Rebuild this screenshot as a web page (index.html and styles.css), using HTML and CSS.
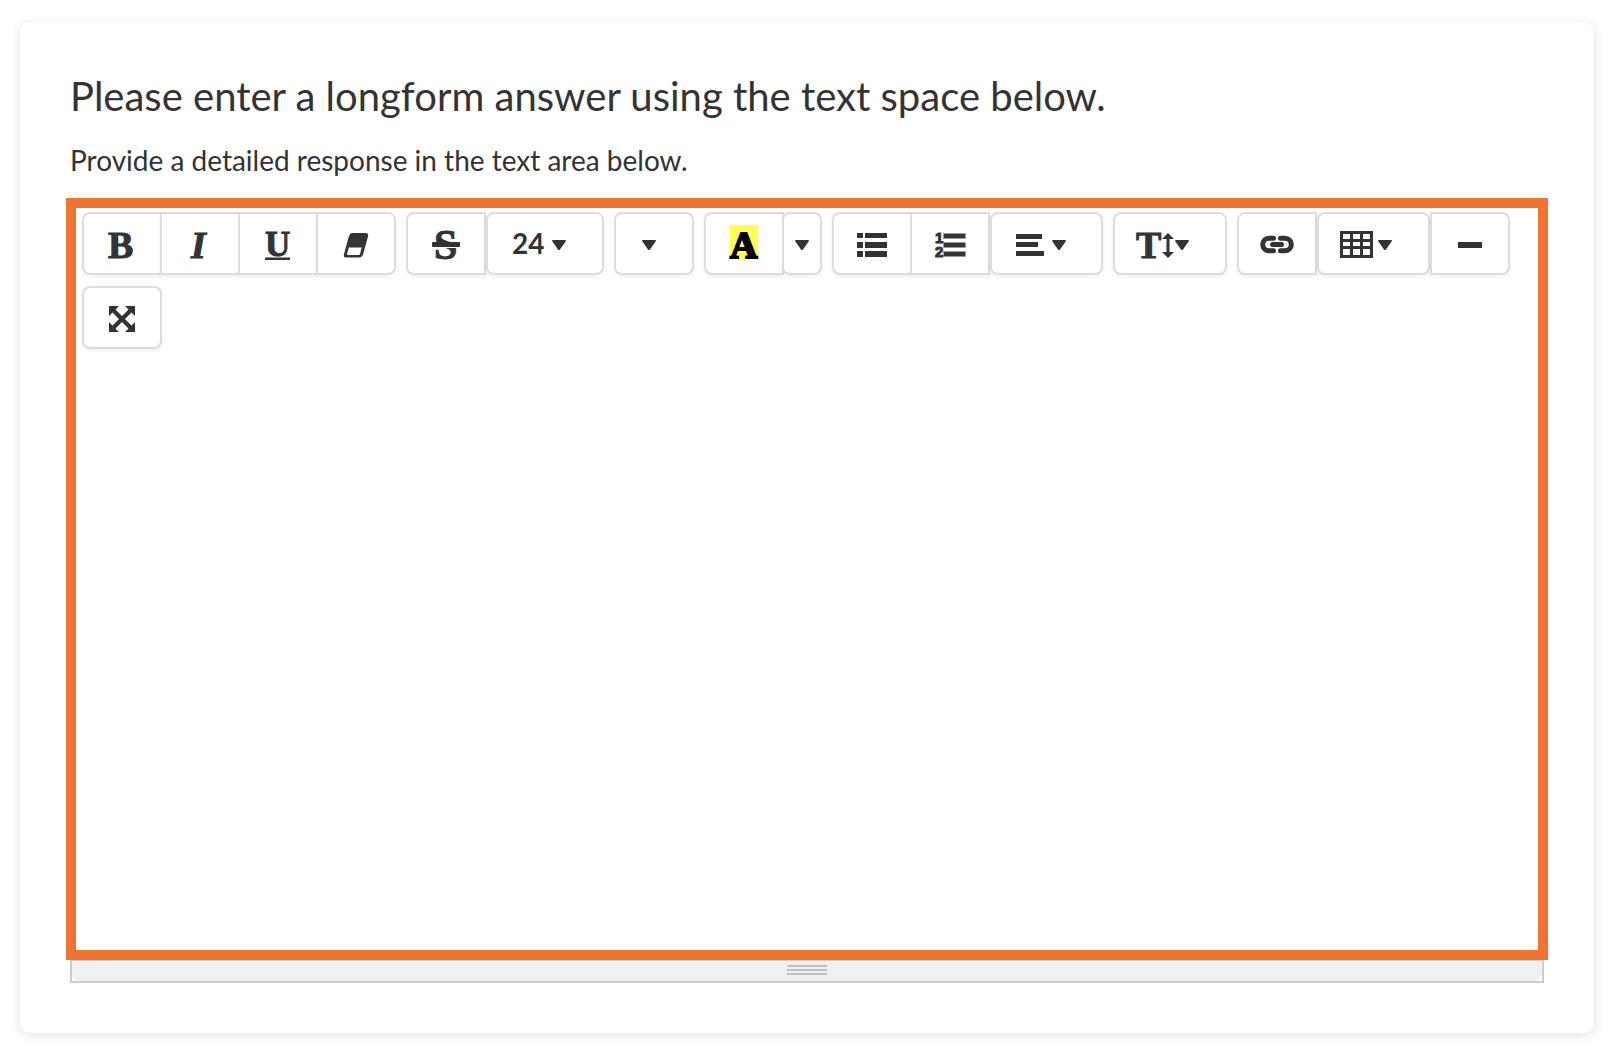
FILE: index.html
```html
<!DOCTYPE html>
<html lang="en">
<head>
    <meta charset="UTF-8">
    <meta name="viewport" content="width=device-width, initial-scale=1.0">
    <title>Longform answer</title>
    <link rel="stylesheet" href="styles.css">
</head>
<body>

    <main class="card">
        <h1 class="question">Please enter a longform answer using the text space below.</h1>
        <label class="hint" for="answer">Provide a detailed response in the text area below.</label>

        <div class="editor">
            <!-- Toolbar -->
            <div class="toolbar" role="toolbar" aria-label="Formatting">
                <div class="btn-group">
                    <button type="button" class="btn" aria-label="Bold">
                        <svg class="icon" viewBox="0 0 32 32"><text class="letter" x="2" y="29" font-size="38">B</text></svg>
                    </button>
                    <button type="button" class="btn" aria-label="Italic">
                        <svg class="icon" viewBox="0 0 32 32"><text class="letter italic" x="7" y="29" font-size="38">I</text></svg>
                    </button>
                    <button type="button" class="btn" aria-label="Underline">
                        <svg class="icon" viewBox="0 0 32 32"><text class="letter" x="3" y="27" font-size="35">U</text><path d="M3 28.500h25v2.500H3z"/></svg>
                    </button>
                    <button type="button" class="btn" aria-label="Remove formatting">
                        <svg class="icon" viewBox="0 0 32 32"><path fill-rule="evenodd" d="M12 4h13.500q3.500 0 2.500 3.500l-5 18q-1 3-4 3H6.500Q3 28.500 4 25l5-18q1-3 3-3zM8.800 18.500l-1.800 6.500q-.3 1 1 1h10.500q1.300 0 1.600-1.200l1.600-6.300z"/></svg>
                    </button>
                </div>

                <div class="btn-group">
                    <button type="button" class="btn" aria-label="Strikethrough">
                        <svg class="icon" viewBox="0 0 32 32"><text class="letter" x="4" y="30" font-size="42">S</text><path fill="#fff" d="M2 18h28v1H2z"/><rect x="2" y="13" width="28" height="5" rx="1"/></svg>
                    </button>
                    <div class="select-wrap">
                        <select class="btn" aria-label="Font size">
                            <option>24</option>
                        </select>
                        <svg class="caret" viewBox="0 0 14 10"><path d="M1 0h12q1.500 0 .6 1.400L8 9.400q-1 1-2 0L.4 1.400Q-.5 0 1 0z"/></svg>
                    </div>
                </div>

                <div class="btn-group">
                    <button type="button" class="btn menu unit" aria-label="Font size unit" aria-haspopup="true">
                        <svg class="caret" viewBox="0 0 14 10"><path d="M1 0h12q1.500 0 .6 1.400L8 9.400q-1 1-2 0L.4 1.400Q-.5 0 1 0z"/></svg>
                    </button>
                </div>

                <div class="btn-group">
                    <button type="button" class="btn" aria-label="Recent color">
                        <svg class="icon" viewBox="0 0 32 32"><path fill="#ffff55" d="M2-4h28v34H2z"/><text class="letter black" x="2" y="29" font-size="38">A</text></svg>
                    </button>
                    <button type="button" class="btn narrow" aria-label="More colors" aria-haspopup="true">
                        <svg class="caret" viewBox="0 0 14 10"><path d="M1 0h12q1.500 0 .6 1.400L8 9.400q-1 1-2 0L.4 1.400Q-.5 0 1 0z"/></svg>
                    </button>
                </div>

                <div class="btn-group">
                    <button type="button" class="btn" aria-label="Unordered list">
                        <svg class="icon" viewBox="0 0 32 32"><path d="M1 4h6v5H1zM9 4h22v5H9zM1 13h6v6H1zM9 13h22v6H9zM1 22h6v6H1zM9 22h22v6H9z"/></svg>
                    </button>
                    <button type="button" class="btn" aria-label="Ordered list">
                        <svg class="icon" viewBox="0 0 32 32">
                            <g fill="#333" stroke="#999"><path d="M9.500 4.500h22v5h-22zM9.500 13.500h22v5h-22zM9.500 22.500h22v5h-22z"/></g>
                            <text class="digit" x="1" y="14">1</text>
                            <text class="digit" x="1" y="28">2</text>
                        </svg>
                    </button>
                    <button type="button" class="btn menu" aria-label="Paragraph" aria-haspopup="true">
                        <svg class="icon align" viewBox="0 0 28 32"><path d="M0 5h26v5H0zM0 13h22v5H0zM0 22h28v5H0z"/></svg>
                        <svg class="caret" viewBox="0 0 14 10"><path d="M1 0h12q1.500 0 .6 1.400L8 9.400q-1 1-2 0L.4 1.400Q-.5 0 1 0z"/></svg>
                    </button>
                </div>

                <div class="btn-group">
                    <button type="button" class="btn menu height" aria-label="Line height" aria-haspopup="true">
                        <svg class="icon wide" viewBox="0 0 40 32"><text class="letter" x="1" y="29" font-size="38">T</text><path d="M33 4l6 6h-4.500v13H39l-6 6-6-6h4.500V10H27z"/></svg>
                        <svg class="caret" viewBox="0 0 14 10"><path d="M1 0h12q1.500 0 .6 1.400L8 9.400q-1 1-2 0L.4 1.400Q-.5 0 1 0z"/></svg>
                    </button>
                </div>

                <div class="btn-group">
                    <button type="button" class="btn" aria-label="Link">
                        <svg class="icon link" viewBox="0 0 34 32"><path fill="none" stroke="#333" stroke-width="5" stroke-linecap="round" d="M13.500 9.200H9a6.200 6.200 0 0 0 0 12.600h4.500M20.500 9.200H25a6.200 6.200 0 0 1 0 12.600h-4.500M12.500 15.500h9"/></svg>
                    </button>
                    <button type="button" class="btn menu table" aria-label="Table" aria-haspopup="true">
                        <svg class="icon grid" viewBox="0 0 33 32"><path fill-rule="evenodd" d="M0 2h33v27H0zM3 5v5h7V5zM13 5v5h7V5zM23 5v5h7V5zM3 13v4h7v-4zM13 13v4h7v-4zM23 13v4h7v-4zM3 20v6h7v-6zM13 20v6h7v-6zM23 20v6h7v-6z"/></svg>
                        <svg class="caret" viewBox="0 0 14 10"><path d="M1 0h12q1.500 0 .6 1.400L8 9.400q-1 1-2 0L.4 1.400Q-.5 0 1 0z"/></svg>
                    </button>
                    <button type="button" class="btn" aria-label="Horizontal rule">
                        <svg class="icon" viewBox="0 0 32 32"><path d="M4 13h24v6H4z"/></svg>
                    </button>
                </div>

                <div class="btn-group">
                    <button type="button" class="btn" aria-label="Full screen">
                        <svg class="icon" viewBox="0 0 32 32"><path d="M3 3h10l-3.500 3.500L16 13l6.500-6.500L19 3h10v10l-3.500-3.500L19 16l6.500 6.500L29 19v10H19l3.500-3.500L16 19l-6.500 6.500L13 29H3V19l3.500 3.500L13 16 6.500 9.500 3 13z"/></svg>
                    </button>
                </div>
            </div>

            <textarea class="editable" id="answer"></textarea>
        </div>

        <!-- Resize handle -->
        <div class="statusbar">
            <div class="grip">
                <div class="grip-line"></div>
                <div class="grip-line"></div>
                <div class="grip-line"></div>
            </div>
        </div>
    </main>

</body>
</html>
```
FILE: styles.css
```css
* {
    box-sizing: border-box;
}

body {
    margin: 0;
    padding: 22px 20px 24px;
    font-family: Lato, sans-serif;
    color: #333;
    background-color: #fff;
}

/* Card */
.card {
    padding: 50px;
    background-color: #fff;
    border-radius: 10px;
    box-shadow: 0 2px 12px rgba(0, 0, 0, 0.12);
}

.question {
    margin: 0 0 20px;
    font-size: 40px;
    font-weight: 400;
    line-height: 48px;
}

.hint {
    display: block;
    margin-bottom: 18px;
    font-size: 28px;
    line-height: 40px;
}

/* Editor */
.editor {
    margin: 0 -4px;
    border: 10px solid #f07330;
    background-color: #fff;
}

.toolbar {
    display: flex;
    flex-wrap: wrap;
    gap: 11px 10px;
    padding: 4px 6px 0;
}

.btn-group {
    display: flex;
}

.btn {
    display: flex;
    align-items: center;
    justify-content: center;
    width: 80px;
    height: 63px;
    margin: 0;
    padding: 3px 0 0;
    font-family: inherit;
    color: #333;
    background-color: #fff;
    border: 2px solid #ddd;
    border-radius: 0;
    box-shadow: 0 2px 4px rgba(0, 0, 0, 0.06);
    cursor: pointer;
}

.btn:hover {
    background-color: #f5f5f5;
}

.btn + .btn {
    margin-left: -2px;
}

.btn:first-child {
    border-top-left-radius: 8px;
    border-bottom-left-radius: 8px;
}

.btn:last-child {
    border-top-right-radius: 8px;
    border-bottom-right-radius: 8px;
}

.btn.narrow {
    width: 40px;
    border-radius: 8px;
}

/* Buttons that open a menu */
.btn.menu {
    justify-content: flex-start;
    gap: 8px;
    width: 113px;
    padding-left: 24px;
    border-radius: 8px;
}

.btn + .btn.menu,
.btn.menu + .btn {
    margin-left: 0;
}

.btn.menu.unit {
    width: 80px;
    padding-left: 26px;
}

.btn.menu.height {
    gap: 0;
    width: 114px;
    padding-left: 20px;
}

.btn.menu.table {
    gap: 5px;
    padding-left: 21px;
}

.select-wrap {
    position: relative;
    width: 118px;
}

.select-wrap .btn {
    appearance: none;
    width: 100%;
    padding: 0 24px 2px;
    font-size: 28px;
    font-weight: 700;
    border-radius: 8px;
}

.select-wrap .caret {
    position: absolute;
    top: 28px;
    left: 66px;
    pointer-events: none;
}

/* Icons */
.icon {
    flex: none;
    width: 32px;
    height: 32px;
    overflow: visible;
    fill: #333;
}

.icon.align {
    width: 28px;
}

.icon.wide {
    width: 40px;
}

.icon.link {
    width: 34px;
}

.icon.grid {
    width: 33px;
}

.caret {
    flex: none;
    width: 14px;
    height: 10px;
    fill: #333;
}

.letter {
    font-family: "Liberation Serif", serif;
    font-weight: 700;
    stroke: #333;
    stroke-width: 1px;
}

.letter.italic {
    font-style: italic;
}

.letter.black {
    fill: #000;
    stroke: #000;
    stroke-width: 2px;
}

.digit {
    font-family: "Liberation Sans", sans-serif;
    font-size: 15px;
    font-weight: 700;
    stroke: #333;
    stroke-width: 1px;
}

.editable {
    display: block;
    width: 100%;
    height: 601px;
    padding: 20px;
    font-family: inherit;
    font-size: 28px;
    color: #333;
    background-color: transparent;
    border: none;
    outline: none;
    resize: none;
}

/* Status bar */
.statusbar {
    border: 2px solid #ccc;
    border-top-width: 1px;
}

.grip {
    display: flex;
    flex-direction: column;
    align-items: center;
    gap: 2px;
    height: 20px;
    padding-top: 4px;
    background-color: #f0f0f0;
    border-radius: 0 0 8px 8px;
    cursor: ns-resize;
}

.grip-line {
    width: 40px;
    height: 2px;
    background-color: #c0c0c0;
}
```
